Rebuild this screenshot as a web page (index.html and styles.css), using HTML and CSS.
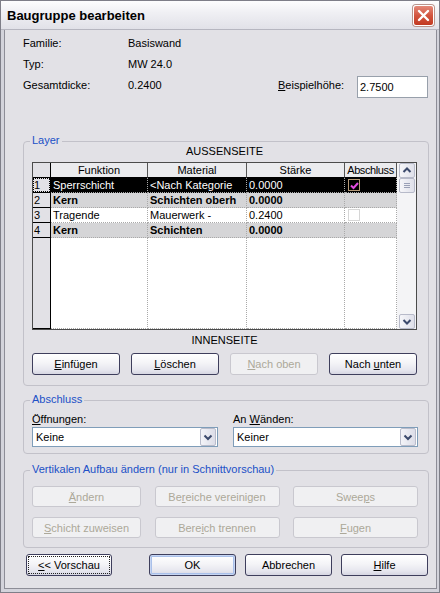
FILE: index.html
```html
<!DOCTYPE html>
<html lang="de">
<head>
<meta charset="utf-8">
<title>Baugruppe bearbeiten</title>
<link rel="stylesheet" href="styles.css">
</head>
<body>
<div class="window">
  <div class="titlebar">
    <span class="title">Baugruppe bearbeiten</span>
    <span class="close"><svg width="19" height="19" viewBox="0 0 19 19"><path d="M5 5 L14 14 M14 5 L5 14" stroke="#fff" stroke-width="2.4" stroke-linecap="round" fill="none"/></svg></span>
  </div>
  <div class="frame">
    <div class="client">
      <div class="info">
        <div class="info-row"><span class="lbl">Familie:</span><span class="val">Basiswand</span></div>
        <div class="info-row"><span class="lbl">Typ:</span><span class="val">MW 24.0</span></div>
        <div class="info-row"><span class="lbl">Gesamtdicke:</span><span class="val">0.2400</span><span class="bh"><u>B</u>eispielhöhe:</span><span class="textbox">2.7500</span></div>
      </div>

      <div class="group layer">
        <span class="group-title">Layer</span>
        <div class="side">AUSSENSEITE</div>
        <div class="grid">
          <table class="layers">
            <colgroup><col class="c-num"><col class="c-fn"><col class="c-mat"><col class="c-st"><col class="c-ab"></colgroup>
            <thead>
              <tr><th class="rn"></th><th>Funktion</th><th>Material</th><th>Stärke</th><th class="narrow">Abschluss</th></tr>
            </thead>
            <tbody>
              <tr class="sel"><th class="rn"><span class="focus">1</span></th><td>Sperrschicht</td><td>&lt;Nach Kategorie</td><td>0.0000</td><td><span class="cb on"><svg width="11" height="11" viewBox="0 0 11 11"><path d="M2 5.5 L4.5 8 L9 3" stroke="#e24be0" stroke-width="2" fill="none"/></svg></span></td></tr>
              <tr class="core"><th class="rn">2</th><td>Kern</td><td>Schichten oberh</td><td>0.0000</td><td></td></tr>
              <tr><th class="rn">3</th><td>Tragende</td><td>Mauerwerk -</td><td>0.2400</td><td><span class="cb"></span></td></tr>
              <tr class="core"><th class="rn">4</th><td>Kern</td><td>Schichten</td><td>0.0000</td><td></td></tr>
              <tr class="filler"><th class="rn"><div class="fill"></div></th><td><div class="fill"></div></td><td><div class="fill"></div></td><td><div class="fill"></div></td><td><div class="fill"></div></td></tr>
            </tbody>
          </table>
          <div class="vscroll">
            <span class="sbtn"><svg width="14" height="13" viewBox="0 0 14 13"><path d="M3.5 8 L7 4.5 L10.5 8" stroke="#3c4a6c" stroke-width="2" fill="none"/></svg></span>
            <span class="sbtn thumb"><svg width="14" height="13" viewBox="0 0 14 13"><path d="M4 4.5 H10 M4 6.5 H10 M4 8.5 H10" stroke="#9aa0b6" stroke-width="1" fill="none"/></svg></span>
            <span class="track"></span>
            <span class="sbtn"><svg width="14" height="13" viewBox="0 0 14 13"><path d="M3.5 5 L7 8.5 L10.5 5" stroke="#3c4a6c" stroke-width="2" fill="none"/></svg></span>
          </div>
        </div>
        <div class="side in">INNENSEITE</div>
        <div class="btn-row">
          <button class="btn w88"><u>E</u>infügen</button>
          <button class="btn w88"><u>L</u>öschen</button>
          <button class="btn w88" disabled><u>N</u>ach oben</button>
          <button class="btn w88">Nach <u>u</u>nten</button>
        </div>
      </div>

      <div class="group abschluss">
        <span class="group-title">Abschluss</span>
        <div class="combo-grid">
          <div class="field">
            <span class="flabel"><u>Ö</u>ffnungen:</span>
            <div class="combo"><span class="cval">Keine</span><span class="drop"><svg width="14" height="16" viewBox="0 0 14 16"><path d="M3.5 6.5 L7 10 L10.5 6.5" stroke="#3c4a6c" stroke-width="2" fill="none"/></svg></span></div>
          </div>
          <div class="field">
            <span class="flabel">An <u>W</u>änden:</span>
            <div class="combo"><span class="cval">Keiner</span><span class="drop"><svg width="14" height="16" viewBox="0 0 14 16"><path d="M3.5 6.5 L7 10 L10.5 6.5" stroke="#3c4a6c" stroke-width="2" fill="none"/></svg></span></div>
          </div>
        </div>
      </div>

      <div class="group vertikal">
        <span class="group-title">Vertikalen Aufbau ändern (nur in Schnittvorschau)</span>
        <div class="vgrid">
          <button class="btn" disabled><u>Ä</u>ndern</button>
          <button class="btn" disabled>Be<u>r</u>eiche vereinigen</button>
          <button class="btn" disabled>Swee<u>p</u>s</button>
          <button class="btn" disabled><u>S</u>chicht zuweisen</button>
          <button class="btn" disabled>Bere<u>i</u>ch trennen</button>
          <button class="btn" disabled><u>F</u>ugen</button>
        </div>
      </div>

      <div class="actions">
        <button class="btn vorschau"><span class="focusrect"><u>&lt;</u>&lt; Vorschau</span></button>
        <button class="btn dflt">OK</button>
        <button class="btn">Abbrechen</button>
        <button class="btn"><u>H</u>ilfe</button>
      </div>
    </div>
  </div>
</div>
</body>
</html>
```

FILE: styles.css
```css
* { box-sizing: border-box; }
html, body { margin: 0; padding: 0; }
body {
  width: 440px;
  height: 593px;
  background: #e2e1e6;
  font: 11px "Liberation Sans", Arial, sans-serif;
  color: #000;
}
u { text-decoration: underline; text-underline-offset: 1px; }

.window {
  width: 440px;
  height: 593px;
  border: 1px solid #7e7e88;
  background: #d3d3db;
  display: flex;
  flex-direction: column;
}

.titlebar {
  height: 29px;
  flex: none;
  display: flex;
  align-items: center;
  padding: 0 5px 0 6px;
  background: linear-gradient(#fdfdfe 0%, #f0f0f4 40%, #e1e1e8 100%);
  border-bottom: 1px solid #b6b6c0;
}
.title {
  flex: 1;
  font-weight: bold;
  font-size: 13px;
  padding-top: 1px;
}
.close {
  width: 21px;
  height: 21px;
  border: 1px solid #fff;
  border-radius: 3px;
  background: linear-gradient(#e48a7a, #d2553f 50%, #c23a22);
  box-shadow: 0 0 0 1px #b9958d;
  display: flex;
  align-items: center;
  justify-content: center;
}

.frame {
  flex: 1;
  display: flex;
  padding: 0 3px 3px;
}
.client {
  flex: 1;
  display: flex;
  flex-direction: column;
  background: #e2e1e6;
  border: 1px solid #8d8d97;
  border-top: none;
}

/* info */
.info { padding: 3px 8px 0 18px; }
.info-row { display: flex; align-items: flex-start; line-height: 21px; }
.lbl { width: 105px; }
.val { flex: 1; }
.bh { width: 79px; }
.textbox {
  width: 71px;
  height: 22px;
  margin-top: 1px;
  background: #fff;
  border: 1px solid #98a0ab;
  padding-left: 2px;
  line-height: 20px;
}

/* group boxes */
.group {
  position: relative;
  border: 1px solid #c2c1c9;
  border-radius: 4px;
  margin-left: 18px;
  margin-right: 7px;
}
.group-title {
  position: absolute;
  top: -8px;
  left: 6px;
  padding: 0 2px;
  line-height: 13px;
  color: #2050c6;
  background: #e2e1e6;
}
.layer { margin-top: 43px; padding: 3px 11px 10px 8px; }
.side { text-align: center; line-height: 13px; }
.side.in { margin-top: 4px; }

.grid {
  margin-top: 4px;
  height: 168px;
  display: flex;
  border: 1px solid #4b4b4b;
  background: #fff;
}
.layers {
  border-collapse: separate;
  border-spacing: 0;
  table-layout: fixed;
  width: 364px;
  flex: none;
}
.c-num { width: 18px; }
.c-fn { width: 97px; }
.c-mat { width: 99px; }
.c-st { width: 98px; }
.c-ab { width: 52px; }

.layers th, .layers td {
  padding: 0 2px;
  line-height: 14px;
  white-space: nowrap;
  overflow: hidden;
  font-weight: normal;
}
.layers thead th {
  background: #ebebee;
  text-align: center;
  padding: 0;
  border-right: 1px solid #555;
  border-bottom: 1px solid #000;
}
.layers thead th.narrow { letter-spacing: -0.4px; }
.layers td {
  border-right: 1px dotted #a9a9a9;
  border-bottom: 1px dotted #a9a9a9;
  text-align: left;
}
.layers th.rn {
  background: #e2e1e6;
  text-align: left;
  padding: 0 0 0 1px;
  border-right: 1px solid #000;
  border-bottom: 1px solid #000;
}
.focus {
  display: block;
  outline: 1px dotted #000;
  outline-offset: -1px;
  padding-left: 1px;
  margin-left: -1px;
}
.sel td { background: #000; color: #fff; }
.core td { background: #d5d5d7; font-weight: bold; }
.filler th, .filler td { padding: 0; line-height: 0; }
.fill { height: 90px; }

.cb {
  display: inline-block;
  vertical-align: middle;
  width: 12px;
  height: 12px;
  margin-left: 1px;
  margin-top: -2px;
  border: 1px solid #d6d6d6;
  background: #fff;
}
.cb.on {
  border-color: #b59a78;
  background: #000;
}
.cb svg { display: block; margin: 0; }

.vscroll {
  flex: 1;
  display: flex;
  flex-direction: column;
  padding: 0 1px 0 2px;
  background: #f4f4f6;
}
.sbtn {
  height: 15px;
  flex: none;
  border: 1px solid #b7bac9;
  border-radius: 2px;
  background: linear-gradient(90deg, #f6f6f9, #dfe0ea);
  display: flex;
  align-items: center;
  justify-content: center;
}
.track { flex: 1; }

.btn-row {
  margin-top: 6px;
  display: flex;
  justify-content: space-between;
}

.btn {
  height: 22px;
  padding: 0;
  font: 11px "Liberation Sans", Arial, sans-serif;
  color: #000;
  text-align: center;
  border: 1px solid #3e3e5c;
  border-radius: 3px;
  background: linear-gradient(#ffffff 0%, #f4f4f7 45%, #e6e6ee 80%, #d6d6e2 100%);
}
.btn:disabled {
  color: #aca899;
  border-color: #c9c8cf;
  background: #f0f0f2;
}
.w88 { width: 88px; }

/* Abschluss */
.abschluss { margin-top: 14px; padding: 12px 9px 6px 8px; }
.combo-grid {
  display: grid;
  grid-template-columns: 186px 185px;
  column-gap: 15px;
}
.flabel { display: block; line-height: 13px; }
.combo {
  margin-top: 1px;
  height: 20px;
  border: 1px solid #7f9db9;
  background: #fff;
  display: flex;
  align-items: center;
  padding-right: 1px;
}
.cval { flex: 1; padding-left: 3px; }
.drop {
  width: 16px;
  height: 18px;
  border: 1px solid #b9bccb;
  border-radius: 2px;
  background: linear-gradient(90deg, #f4f4f8, #dcdde8);
  display: flex;
  align-items: center;
  justify-content: center;
}

/* Vertikal */
.vertikal { margin-top: 16px; padding: 15px 10px 9px 8px; }
.vgrid {
  display: grid;
  grid-template-columns: 109px 125px 125px;
  justify-content: space-between;
  row-gap: 10px;
}
.vgrid .btn { height: 21px; }

/* actions */
.actions {
  display: flex;
  gap: 9px;
  padding: 6px 8px 0 21px;
}
.actions .btn { width: 87px; height: 22px; }
.actions .vorschau { width: 86px; margin-right: auto; }
.focusrect {
  display: block;
  margin: 0 auto;
  width: 80px;
  height: 16px;
  line-height: 16px;
  outline: 1px dotted #222;
}
.dflt {
  box-shadow: inset 0 0 0 1px #c6d5f2, inset 0 0 0 2px #a9c0ea;
}
```
